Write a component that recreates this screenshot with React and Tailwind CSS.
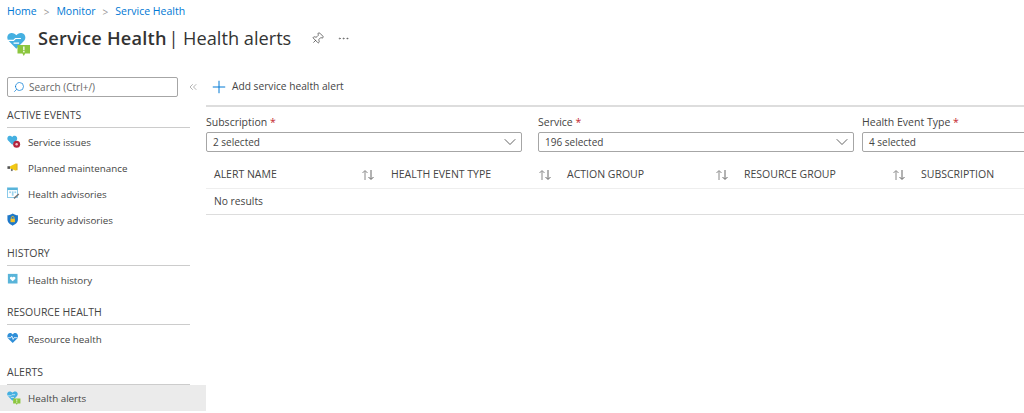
import { ChevronDown, ChevronsLeft, Ellipsis, Pin, Plus, Search } from 'lucide-react';

function HeartAlert({ size = 24 }) {
  return (
    <svg width={size} height={size} viewBox="0 0 24 24">
      <g transform="translate(-0.8 -1.8) scale(0.92)">
        <path d="M11 19 L2.5 10.5 C0 7.5 1 2.5 5.5 2 C8 1.8 10 3 11 4.5 C12 3 14 1.8 16.5 2 C21 2.5 22 7.5 19.5 10.5 Z" fill="#45b0e1" />
        <path d="M2 10 H8 L10 8 H16 M8 13 H14" stroke="#fff" strokeWidth="1.2" fill="none" />
      </g>
      <path d="M10.5 12 H23 V20.5 H18.2 L16.8 23 L15.4 20.5 H10.5 Z" fill="#8cc63f" />
      <rect x="16.2" y="13.5" width="1.3" height="3.8" fill="#fff" />
      <rect x="16.2" y="18" width="1.3" height="1.4" fill="#fff" />
    </svg>
  );
}

function IssuesIcon() {
  return (
    <svg width="16" height="16" viewBox="0 0 16 16">
      <path d="M6 11 L1 6 C-0.5 3.5 1 0.5 3.5 0.8 C4.8 1 5.6 1.6 6 2.4 C6.6 1.4 7.6 0.8 9 0.9 C11.5 1.2 12.4 4 11 6 Z" fill="#45b0e1" />
      <circle cx="11" cy="10.5" r="4" fill="#b3243c" />
      <circle cx="11" cy="10.5" r="1.4" fill="#f3c6cd" />
    </svg>
  );
}

function MaintenanceIcon() {
  return (
    <svg width="16" height="16" viewBox="0 0 16 16">
      <rect x="0.5" y="6" width="3" height="3" fill="#555" />
      <path d="M3.5 6 L10.5 2.5 V11 L3.5 8.5 Z" fill="#f2c811" />
      <rect x="10.5" y="3" width="1.5" height="7.5" fill="#d9a800" />
      <rect x="4.5" y="9" width="2" height="2.5" fill="#777" />
    </svg>
  );
}

function AdvisoryIcon() {
  return (
    <svg width="16" height="16" viewBox="0 0 16 16">
      <rect x="0.5" y="1" width="11.5" height="11" fill="#fff" stroke="#7cc4e8" />
      <rect x="0.5" y="1" width="11.5" height="2.5" fill="#59b4d9" />
      <rect x="2.5" y="5" width="2" height="2" fill="#9bd2ec" />
      <rect x="5.5" y="5" width="2" height="5" fill="#9bd2ec" />
      <rect x="8.5" y="5" width="2" height="2" fill="#9bd2ec" />
      <path d="M8 13 L13.5 8" stroke="#777" strokeWidth="1.6" />
    </svg>
  );
}

function ShieldIcon() {
  return (
    <svg width="16" height="16" viewBox="0 0 16 16">
      <path d="M6.5 0.5 C8.5 2 10.5 2.5 12.5 2.5 V7.5 C12.5 11 9.5 13 6.5 14.5 C3.5 13 0.5 11 0.5 7.5 V2.5 C2.5 2.5 4.5 2 6.5 0.5 Z" fill="#1e78c8" />
      <rect x="4" y="6.5" width="5" height="4" fill="#f7c325" />
      <path d="M5 6.5 V5.2 C5 3.5 8 3.5 8 5.2 V6.5" stroke="#f7c325" fill="none" />
    </svg>
  );
}

function HistoryIcon() {
  return (
    <svg width="16" height="16" viewBox="0 0 16 16">
      <rect x="1" y="1" width="11" height="11" fill="#59b4d9" />
      <path d="M6.5 9.5 L3.5 6.5 C2.8 5 4.6 3.6 6.5 5 C8.4 3.6 10.2 5 9.5 6.5 Z" fill="#fff" />
    </svg>
  );
}

function ResourceIcon() {
  return (
    <svg width="16" height="16" viewBox="0 0 16 16">
      <path d="M6.5 12.5 L1 7 C-0.5 4 1 1 3.5 1 C5 1 6 1.8 6.5 2.8 C7 1.8 8 1 9.5 1 C12 1 13.5 4 12 7 Z" fill="#2f8fd8" />
      <path d="M1 6.5 H4.5 L5.5 4.5 L7 8.5 L8 6.5 H12" stroke="#fff" strokeWidth="0.9" fill="none" />
    </svg>
  );
}

function SortIcon() {
  return (
    <svg width="14" height="12" viewBox="0 0 14 12" fill="none" stroke="#666" strokeWidth="1">
      <path d="M4 11 V2 M1.5 4 L4 1.5 L6.5 4" stroke="#888" />
      <path d="M10 1 V10 M7.5 8 L10 10.5 L12.5 8" />
    </svg>
  );
}

function Section({ title, items, className }) {
  return (
    <div className={className}>
      <div className="ml-[7px] w-[183px] h-[25px] leading-[24px] text-[10.5px] text-[#444] border-b border-[#ccc]">{title}</div>
      {items.map((it) => (
        <div
          key={it.label}
          className={`flex items-center h-[26px] pl-[7px] gap-[7px] text-[9.8px] text-[#444] ${it.active ? 'bg-[#ebebeb]' : ''}`}
        >
          <span className="w-[14px] flex justify-center shrink-0">{it.icon}</span>
          <span className="pt-[2px]">{it.label}</span>
        </div>
      ))}
    </div>
  );
}

function Dropdown({ label, value, className }) {
  return (
    <div className={className}>
      <div className="h-[19px] leading-[19px] text-[#444]">
        {label} <span className="text-[#c4262e]">*</span>
      </div>
      <div className="h-[20px] border border-[#a6a6a6] rounded-[2px] flex items-center justify-between pl-[6px] pr-[1px] text-[10px] text-[#444]">
        {value}
        <ChevronDown size={20} strokeWidth={1} color="#444" />
      </div>
    </div>
  );
}

const columns = ['ALERT NAME', 'HEALTH EVENT TYPE', 'ACTION GROUP', 'RESOURCE GROUP', 'SUBSCRIPTION'];

export default function App() {
  return (
    <div className="w-[1024px] h-[413px] overflow-hidden bg-white text-[10.5px] font-['Open_Sans',sans-serif]">
      <div className="h-[24px] pl-[7px] flex items-center gap-[7px] text-[#0078d4] text-[10.5px]">
        <span>Home</span>
        <span className="text-[#999] text-[10px]">&gt;</span>
        <span>Monitor</span>
        <span className="text-[#999] text-[10px]">&gt;</span>
        <span>Service Health</span>
      </div>

      <div className="h-[29px] pl-[7px] flex items-center">
        <span className="w-[24px] mt-[12px] shrink-0">
          <HeartAlert />
        </span>
        <h1 className="ml-[7px] text-[18.2px] text-[#333]">
          <span className="font-semibold tracking-[0.2px]">Service Health</span>
          <span className="ml-[-3px]"> | Health alerts</span>
        </h1>
        <Pin size={13} strokeWidth={1.2} color="#333" className="ml-[20px] rotate-45" />
        <Ellipsis size={13} strokeWidth={1} color="#444" className="ml-[13px]" />
      </div>

      <div className="flex">
        <aside className="w-[206px] shrink-0 pt-[24px]">
          <div className="flex items-center pl-[7px] mb-[6px]">
            <div className="w-[171px] h-[20px] border border-[#a6a6a6] rounded-[2px] flex items-center pl-[5px] gap-[4px] text-[10px] text-[#666]">
              <Search size={12} strokeWidth={1.4} color="#0078d4" className="-scale-x-100" />
              Search (Ctrl+/)
            </div>
            <ChevronsLeft size={12} strokeWidth={1} color="#666" className="ml-[9px]" />
          </div>
          <Section
            title="ACTIVE EVENTS"
            className="mb-[8px] [&>div:nth-child(2)]:mt-[1px]"
            items={[
              { label: 'Service issues', icon: <IssuesIcon /> },
              { label: 'Planned maintenance', icon: <MaintenanceIcon /> },
              { label: 'Health advisories', icon: <AdvisoryIcon /> },
              { label: 'Security advisories', icon: <ShieldIcon /> },
            ]}
          />
          <Section
            title="HISTORY"
            className="mb-[7px] [&>div:nth-child(2)]:mt-[1px]"
            items={[{ label: 'Health history', icon: <HistoryIcon /> }]}
          />
          <Section
            title="RESOURCE HEALTH"
            className="mb-[8px] [&>div:nth-child(2)]:mt-[1px]"
            items={[{ label: 'Resource health', icon: <ResourceIcon /> }]}
          />
          <Section title="ALERTS" items={[{ label: 'Health alerts', icon: <HeartAlert size={15} />, active: true }]} />
        </aside>

        <main className="w-[818px] shrink-0 overflow-hidden pt-[14px]">
          <div className="h-[40px] pt-[2px] border-b-2 border-[#ddd] flex items-center pl-[3px] gap-[3px] text-[10.2px] text-[#444]">
            <Plus size={20} strokeWidth={1.2} color="#0078d4" />
            Add service health alert
          </div>
          <div className="flex pt-[6px]">
            <Dropdown label="Subscription" value="2 selected" className="w-[316px] shrink-0 mr-[16px]" />
            <Dropdown label="Service" value="196 selected" className="w-[316px] shrink-0 mr-[8px]" />
            <Dropdown label="Health Event Type" value="4 selected" className="w-[316px] shrink-0" />
          </div>
          <div className="mt-[8px] pt-[1px] grid grid-cols-[177px_177px_177px_177px_110px] h-[29px] border-b border-[#eee] items-center text-[#444]">
            {columns.map((c, i) => (
              <div key={c} className={`flex items-center justify-between pr-[8px] ${i >= 2 ? 'pl-[7px]' : 'pl-[8px]'}`}>
                <span>{c}</span>
                {i < 4 && <SortIcon />}
              </div>
            ))}
          </div>
          <div className="h-[26px] border-b border-[#ddd] flex items-center pl-[8px] text-[10.3px] text-[#444]">No results</div>
        </main>
      </div>
    </div>
  );
}
